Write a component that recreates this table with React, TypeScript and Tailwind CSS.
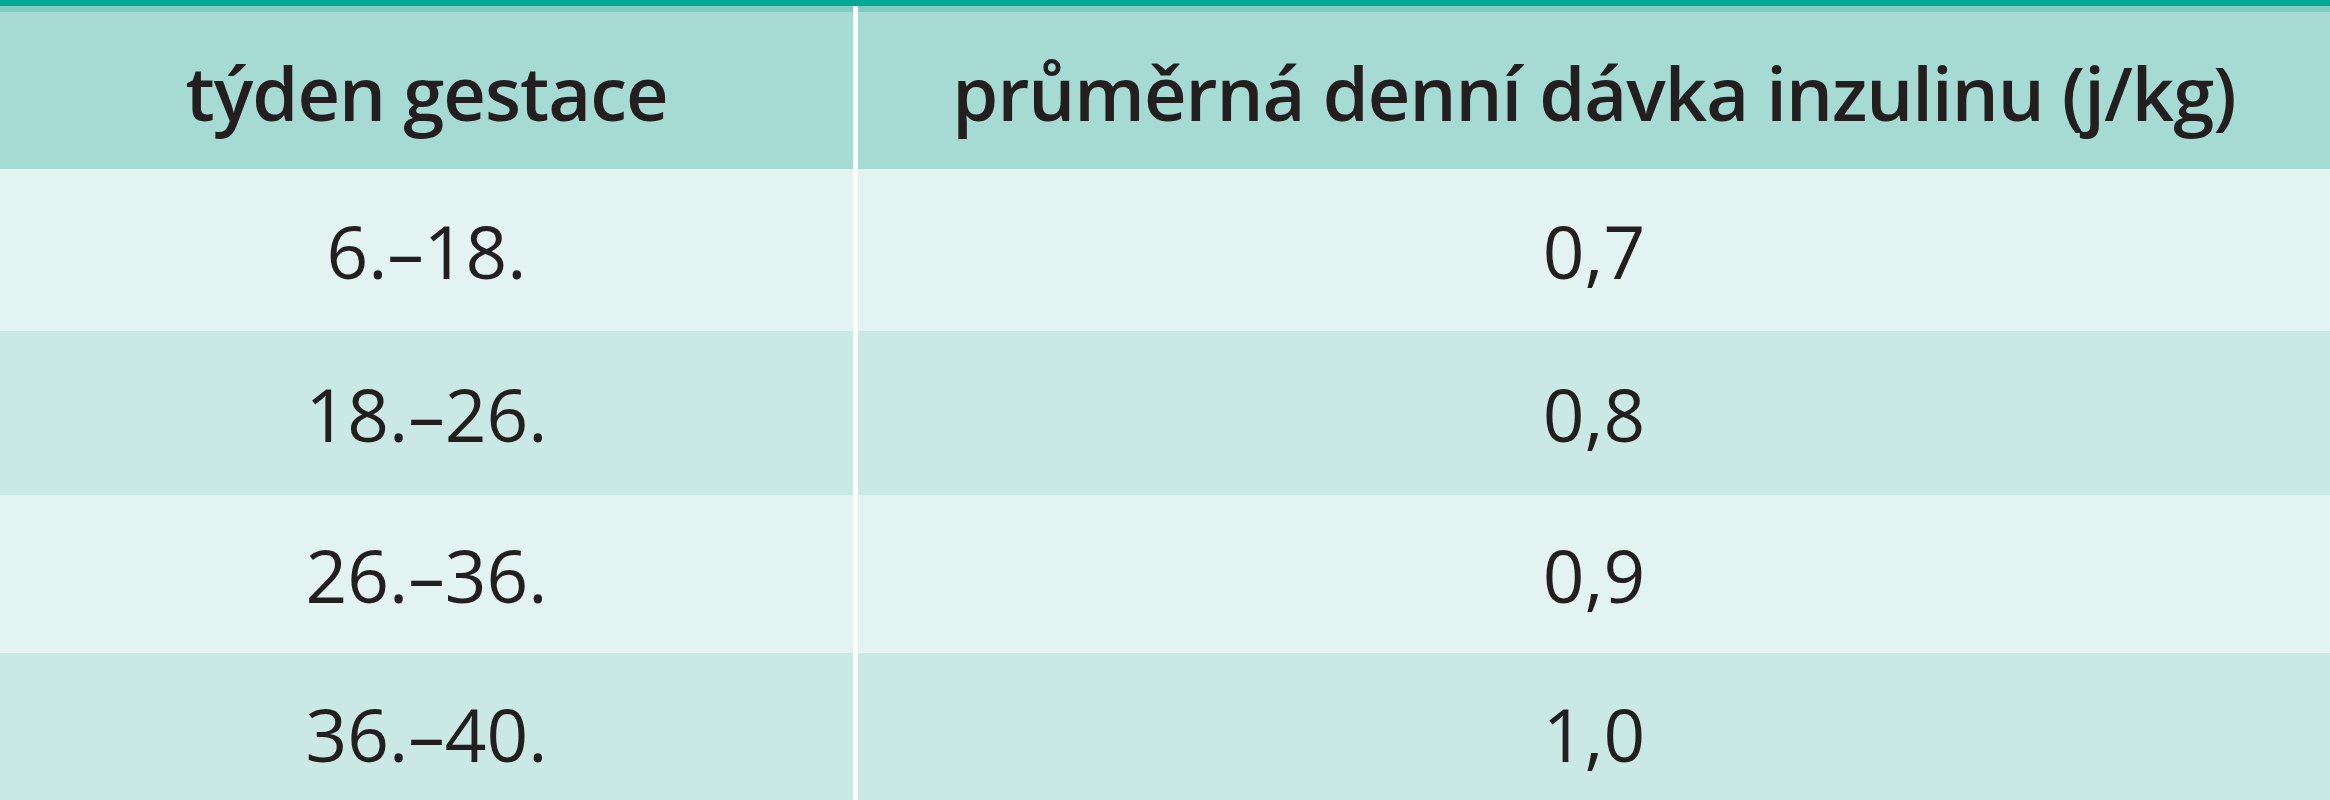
import React from 'react';

const rows = [
  { week: '6.–18.', dose: '0,7', h: 'h-[162px]', bg: 'bg-[#e2f3f1]' },
  { week: '18.–26.', dose: '0,8', h: 'h-[164px]', bg: 'bg-[#cae9e5]' },
  { week: '26.–36.', dose: '0,9', h: 'h-[158px]', bg: 'bg-[#e2f3f1]' },
  { week: '36.–40.', dose: '1,0', h: 'h-[160px]', bg: 'bg-[#cae9e5]' },
];

const App: React.FC = () => {
  return (
    <div className="w-[2330px] h-[800px] overflow-hidden bg-white font-['Open_Sans',sans-serif] text-[#231f20]">
      <div className="border-t-[6px] border-[#00a896]">
        <div className="grid grid-cols-[853px_1fr] gap-x-[5px] bg-white">
          {/* header */}
          <div className="h-[163px] border-t-[6px] border-[#80cbc2] bg-[#a6dbd4] flex items-center justify-center">
            <span className="text-[74px] font-semibold tracking-[-1px] leading-none pt-[4px]">týden gestace</span>
          </div>
          <div className="h-[163px] border-t-[6px] border-[#80cbc2] bg-[#a6dbd4] flex items-center justify-center">
            <span className="text-[74px] font-semibold tracking-[-1px] leading-none pt-[4px]">průměrná denní dávka inzulinu (j/kg)</span>
          </div>

          {rows.map((r) => (
            <React.Fragment key={r.week}>
              <div className={`${r.h} ${r.bg} flex items-center justify-center`}>
                <span className="text-[73px] font-normal leading-none">{r.week}</span>
              </div>
              <div className={`${r.h} ${r.bg} flex items-center justify-center`}>
                <span className="text-[73px] font-normal leading-none">{r.dose}</span>
              </div>
            </React.Fragment>
          ))}
        </div>
      </div>
    </div>
  );
};

export default App;
